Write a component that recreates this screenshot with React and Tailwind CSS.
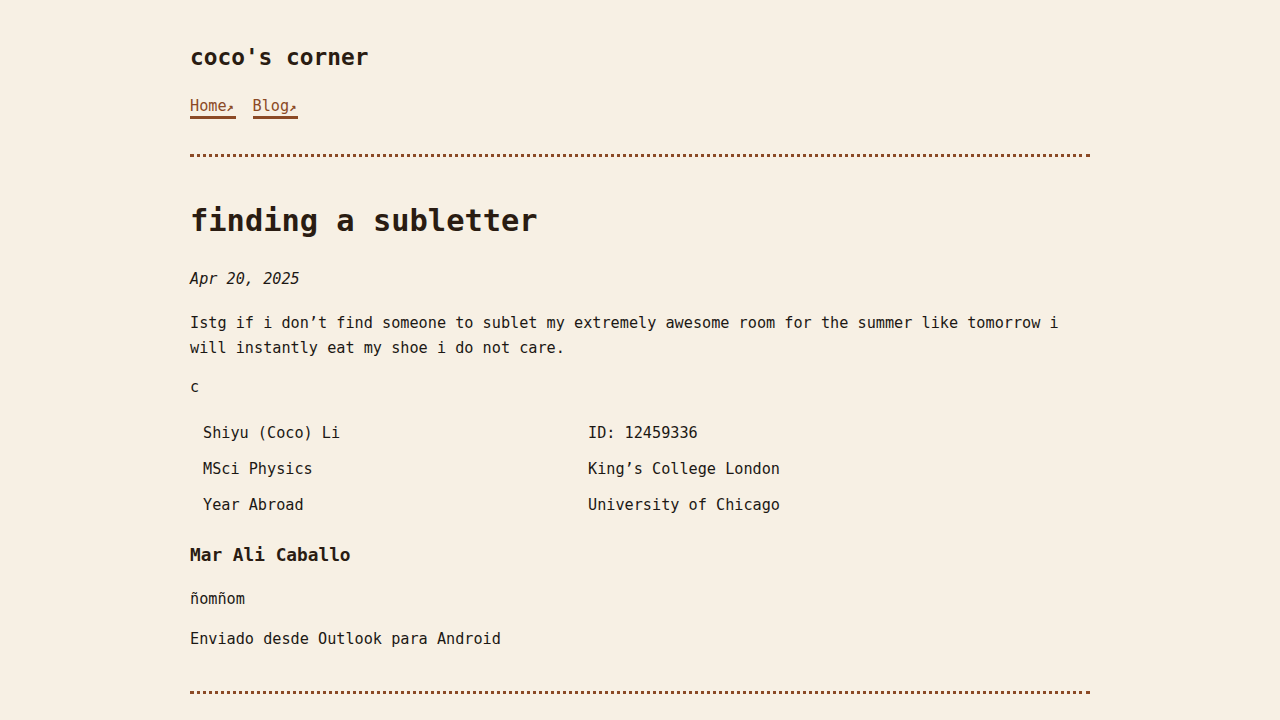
const mono = "font-['DejaVu_Sans_Mono',_'Liberation_Mono',_monospace]";

function NavLink({ label }) {
  return (
    <a
      href="#"
      className="inline-block pt-[3px] leading-[17px] border-b-[3px] border-[#8b4a26] text-[#8b4a26] text-[15.2px]"
    >
      {label}
      <span className="inline-block w-[9px] text-[12px] font-bold">↗</span>
    </a>
  );
}

function InfoRow({ left, right }) {
  return (
    <div className="grid grid-cols-[385px_1fr] h-[36px] items-center">
      <div className="pl-[13px]">{left}</div>
      <div className="pl-[13px]">{right}</div>
    </div>
  );
}

export default function App() {
  return (
    <div className={`min-h-screen bg-[#f7f0e4] text-[#1c1814] text-[15.2px] ${mono}`}>
      <div className="w-[900px] mx-auto pt-[42px]">
        <header>
          <h1 className="text-[22.8px] leading-[30px] font-bold text-[#2a1c12]">coco's corner</h1>
          <nav className="mt-[23px] flex gap-[17px]">
            <NavLink label="Home" />
            <NavLink label="Blog" />
          </nav>
          <div className="mt-[35px] border-t-[3px] border-dotted border-[#8b4a26]" />
        </header>

        <article>
          <h2 className="mt-[45px] text-[30.4px] leading-[38px] font-bold text-[#2a1c12]">
            finding a subletter
          </h2>
          <p className="mt-[27px] italic leading-[25px]">Apr 20, 2025</p>
          <p className="mt-[19px] leading-[25px]">
            Istg if i don’t find someone to sublet my extremely awesome room for the summer like tomorrow i
            will instantly eat my shoe i do not care.
          </p>
          <p className="mt-[14px] leading-[25px]">c</p>

          <div className="mt-[15px] leading-[25px]">
            <InfoRow left="Shiyu (Coco) Li" right="ID: 12459336" />
            <InfoRow left="MSci Physics" right="King’s College London" />
            <InfoRow left="Year Abroad" right="University of Chicago" />
          </div>

          <h3 className="mt-[20px] text-[17.8px] leading-[24px] font-bold text-[#2a1c12]">Mar Ali Caballo</h3>
          <p className="mt-[19.5px] leading-[25px]">ñomñom</p>
          <p className="mt-[15px] leading-[25px]">Enviado desde Outlook para Android</p>
        </article>

        <footer className="mt-[39.5px] border-t-[3px] border-dotted border-[#8b4a26] pb-[40px]" />
      </div>
    </div>
  );
}
